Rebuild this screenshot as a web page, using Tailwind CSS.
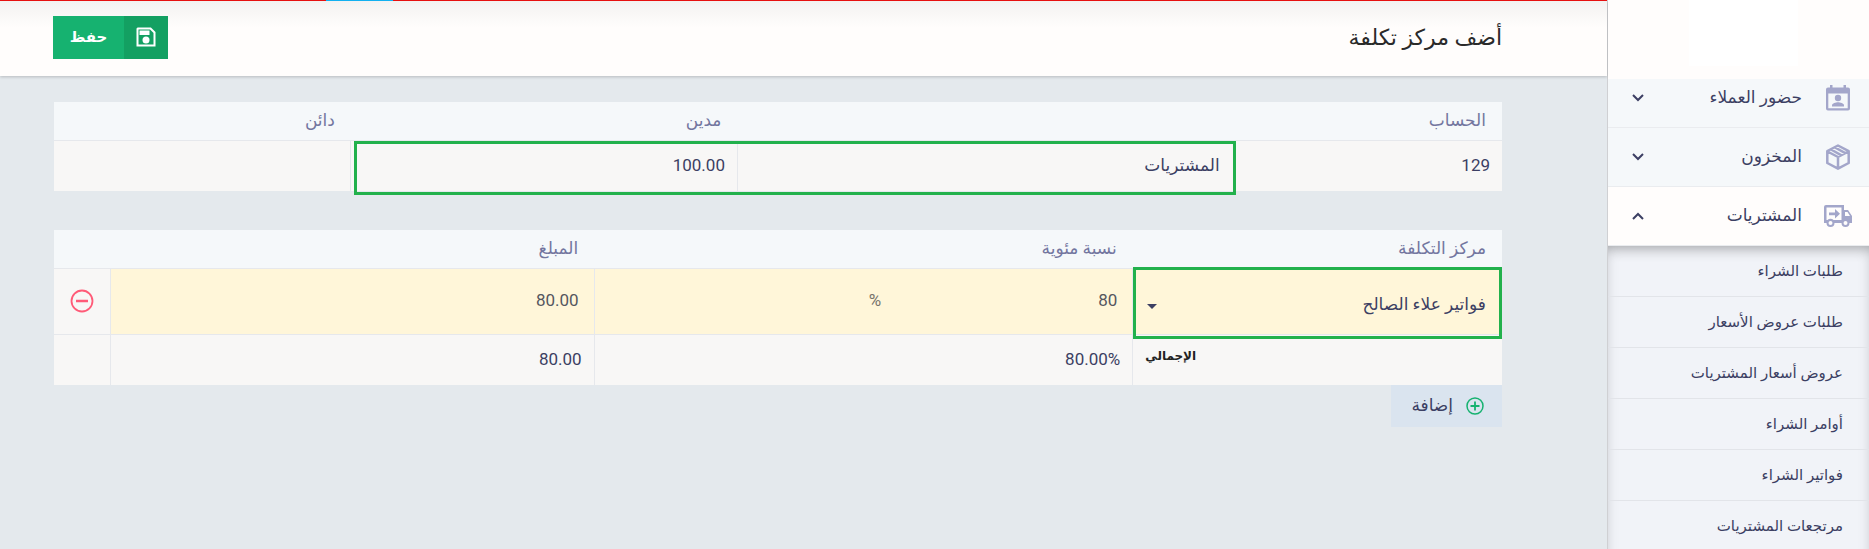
<!DOCTYPE html>
<html lang="ar" dir="rtl">
<head>
    <meta charset="UTF-8">
    <meta name="viewport" content="width=device-width, initial-scale=1.0">
    <title>أضف مركز تكلفة</title>
    <script src="https://cdn.jsdelivr.net/npm/@tailwindcss/browser@4"></script>
    <style>
        body {
            font-family: Roboto, 'DejaVu Sans', sans-serif;
        }
    </style>
</head>
<body class="bg-[#e4e9ed] text-[#3c3f63] flex h-screen overflow-hidden">

    <!-- Sidebar -->
    <aside class="w-[262px] shrink-0 border-l border-[#cfd0d3] bg-[#f5f8fa] overflow-hidden">
        <!-- Logo -->
        <div class="relative z-10 h-[79px] bg-[#fffdfc]">
            <div class="w-[109px] h-[66px] mr-[71px] bg-white"></div>
        </div>
        <nav class="-mt-[10px]">
            <a href="#" class="flex items-center h-[59px] pr-[18px] pl-6 border-b border-[#eaecef] text-[17px]">
                <svg class="w-[26px] h-[28px] fill-[#a3a6ca]" viewBox="0 0 26 28">
                    <path fill-rule="evenodd" d="M5 1h2.500v2.500h11V1H21v2.500h2a2 2 0 0 1 2 2V24.500a2 2 0 0 1-2 2H3a2 2 0 0 1-2-2V5.500a2 2 0 0 1 2-2h2zM3.300 9.500v14.700h19.400V9.500z"/>
                    <circle cx="13" cy="14" r="3.200"/>
                    <path d="M7 22.500v-1.200c0-2 4-3 6-3s6 1 6 3v1.200z"/>
                </svg>
                <span class="mr-[23px] grow">حضور العملاء</span>
                <svg class="w-3 h-2 fill-none stroke-current stroke-2" viewBox="0 0 12 8"><path d="M1 1l5 5 5-5"/></svg>
            </a>
            <a href="#" class="flex items-center h-[59px] pr-[18px] pl-6 border-b border-[#eaecef] text-[17px]">
                <svg class="w-[26px] h-[28px] fill-none stroke-[#a3a6ca]" stroke-width="2.500" stroke-linejoin="round" viewBox="0 0 26 28">
                    <path d="M13 2.500l10.700 5.700v11.800L13 25.700 2.300 20V8.200zM2.500 8.500L13 14l10.500-5.500M13 14v11.500M6 6.500l10.500 5.800M10 4.500l10.300 5.700"/>
                </svg>
                <span class="mr-[23px] grow">المخزون</span>
                <svg class="w-3 h-2 fill-none stroke-current stroke-2" viewBox="0 0 12 8"><path d="M1 1l5 5 5-5"/></svg>
            </a>
            <a href="#" class="flex items-center h-[59px] pr-[16px] pl-6 border-b border-[#eaecef] bg-[#fffdfc] text-[17px]">
                <svg class="w-[30px] h-[24px] fill-[#a3a6ca]" viewBox="0 0 30 24">
                    <path fill-rule="evenodd" d="M3 1h18v5h4l4 6v7h-2.500a4 4 0 0 1-8 0h-7a4 4 0 0 1-8 0H1V3a2 2 0 0 1 2-2zM3.500 3.500v12.500h1a4 4 0 0 1 6 0h8V3.500zM22 8v4h5l-2.500-4zM7.500 17a2 2 0 1 0 0 4 2 2 0 0 0 0-4zM22.500 17a2 2 0 1 0 0 4 2 2 0 0 0 0-4z"/>
                    <path d="M6 8.500h6V5l5 4.800-5 4.700v-3.300H6z"/>
                </svg>
                <span class="mr-[21px] grow">المشتريات</span>
                <svg class="w-3 h-2 fill-none stroke-current stroke-2" viewBox="0 0 12 8"><path d="M1 7l5-5 5 5"/></svg>
            </a>
            <!-- Submenu -->
            <div class="pb-8 bg-[#f1f3f8] text-[15px] shadow-[inset_0_10px_14px_-8px_rgba(0,0,0,0.3),inset_0_0_14px_rgba(0,0,0,0.08)]">
                <a href="#" class="flex items-center h-[51px] pr-[26px] border-b border-[#e2e4e9]">طلبات الشراء</a>
                <a href="#" class="flex items-center h-[51px] pr-[26px] border-b border-[#e2e4e9]">طلبات عروض الأسعار</a>
                <a href="#" class="flex items-center h-[51px] pr-[26px] border-b border-[#e2e4e9]">عروض أسعار المشتريات</a>
                <a href="#" class="flex items-center h-[51px] pr-[26px] border-b border-[#e2e4e9]">أوامر الشراء</a>
                <a href="#" class="flex items-center h-[51px] pr-[26px] border-b border-[#e2e4e9]">فواتير الشراء</a>
                <a href="#" class="flex items-center h-[51px] pr-[26px] border-b border-[#e2e4e9]">مرتجعات المشتريات</a>
            </div>
        </nav>
    </aside>

    <div class="grow min-w-0">
        <!-- Loading bar -->
        <div class="flex h-px bg-[#ee1111]">
            <div class="w-[67px] mr-auto ml-[326px] bg-[#12b0f0]"></div>
        </div>

        <!-- Page header -->
        <header class="flex items-center justify-between h-[75px] pr-[105px] pl-[53px] pb-[3px] bg-linear-to-b from-[#f3f2f1] to-[#fffdfc] to-35% shadow-[0_1px_3px_rgba(0,0,0,0.2)]">
            <h1 class="text-[22px] text-[#2a2a2a]">أضف مركز تكلفة</h1>
            <button type="button" class="flex h-[43px] bg-[#16b270] text-white text-[15px] font-bold">
                <span class="flex items-center justify-center w-[44px] h-full bg-[#13a062]">
                    <svg class="w-5 h-5" viewBox="0 0 20 20">
                        <path class="fill-none stroke-white stroke-2" d="M2 1.500h12.500l4 4v13H1.500V2z"/>
                        <path class="fill-white" d="M3.500 3.500h10V8h-10z"/>
                        <circle class="fill-white" cx="10" cy="13" r="3.500"/>
                    </svg>
                </span>
                <span class="flex items-center justify-center w-[71px] h-full">حفظ</span>
            </button>
        </header>

        <main class="pt-[26px] pr-[105px] pl-[54px]">
            <!-- Account -->
            <div class="relative mb-[39px]">
                <table class="w-full table-fixed border-collapse bg-[#f8f7f6] text-[17px]">
                    <colgroup>
                        <col class="w-[18.5%]">
                        <col class="w-[34.3%]">
                        <col class="w-[26.7%]">
                        <col>
                    </colgroup>
                    <thead class="bg-[#f5f8fa] text-[#73769f]">
                        <tr class="h-[38px] border-b border-[#e6e8ec]">
                            <th colspan="2" class="px-4 py-0 text-right font-normal">الحساب</th>
                            <th class="px-4 py-0 text-right font-normal">مدين</th>
                            <th class="px-4 py-0 text-right font-normal">دائن</th>
                        </tr>
                    </thead>
                    <tbody>
                        <tr class="h-[51px]">
                            <td class="px-3 py-0">129</td>
                            <td class="px-[14px] py-0 border-x border-[#e6e8ec]">المشتريات</td>
                            <td class="px-3 py-0 border-l border-[#e6e8ec]">100.00</td>
                            <td></td>
                        </tr>
                    </tbody>
                </table>
                <div class="absolute top-[39px] -bottom-1 right-[18.4%] w-[60.9%] border-3 border-[#22b14c]"></div>
            </div>

            <!-- Cost centers -->
            <table class="w-full table-fixed border-collapse bg-[#f8f7f6] text-[17px]">
                <thead class="bg-[#f5f8fa] text-[#73769f]">
                    <tr class="h-[38px] border-b border-[#e6e8ec]">
                        <th id="center" class="w-[25.5%] px-4 py-0 text-right font-normal">مركز التكلفة</th>
                        <th id="percent" class="w-[37.2%] px-4 py-0 text-right font-normal">نسبة مئوية</th>
                        <th id="amount" class="px-4 py-0 text-right font-normal">المبلغ</th>
                        <th class="w-[56px]"></th>
                    </tr>
                </thead>
                <tbody>
                    <tr class="h-[66px] border-b border-[#e6e8ec] bg-[#fff6d9]">
                        <td class="relative p-0 border-l border-[#e6e8ec]">
                            <select aria-labelledby="center" class="block w-full h-[65px] px-4 pt-2 appearance-none bg-transparent">
                                <option>فواتير علاء الصالح</option>
                            </select>
                            <svg class="absolute left-[14px] top-[35px] w-[10px] h-[5px] fill-current pointer-events-none" viewBox="0 0 10 5"><path d="M0 0h10L5 5z"/></svg>
                            <div class="absolute -top-[2px] -bottom-[5px] inset-x-0 border-3 border-[#22b14c] pointer-events-none"></div>
                        </td>
                        <td class="p-0 border-l border-[#e6e8ec]">
                            <div class="flex items-center px-[15px] text-[#55565f]">
                                <input type="text" value="80" aria-labelledby="percent" class="w-[236px] bg-transparent">
                                <span class="text-[#77746c]">%</span>
                            </div>
                        </td>
                        <td class="px-[15px] py-0 border-l border-[#e6e8ec] text-[#55565f]">
                            <input type="text" value="80.00" aria-labelledby="amount" class="w-full bg-transparent">
                        </td>
                        <td class="p-0 bg-[#f8f7f6]">
                            <button type="button" aria-label="حذف" class="block mx-auto">
                                <svg class="w-6 h-6 fill-none stroke-[#ff5b78]" viewBox="0 0 24 24"><circle cx="12" cy="12" r="10.500" stroke-width="1.800"/><path stroke-width="2.500" d="M6 12h12"/></svg>
                            </button>
                        </td>
                    </tr>
                    <tr class="h-[51px]">
                        <td class="px-3 pt-0 pb-2 border-l border-[#e6e8ec] text-left text-xs font-bold text-[#222]">الإجمالي</td>
                        <td class="px-3 py-0 border-l border-[#e6e8ec]"><span dir="ltr">80.00%</span></td>
                        <td class="px-3 py-0 border-l border-[#e6e8ec]">80.00</td>
                        <td></td>
                    </tr>
                </tbody>
            </table>
            <button type="button" class="flex items-center gap-[13px] h-[42px] pr-[18px] pl-5 bg-[#dae4ef] text-[17px]">
                <svg class="w-[18px] h-[18px] fill-none stroke-[#16b270]" viewBox="0 0 18 18"><circle cx="9" cy="9" r="8" stroke-width="1.500"/><path stroke-width="1.800" d="M4.500 9h9M9 4.500v9"/></svg>
                إضافة
            </button>
        </main>
    </div>

</body>
</html>
